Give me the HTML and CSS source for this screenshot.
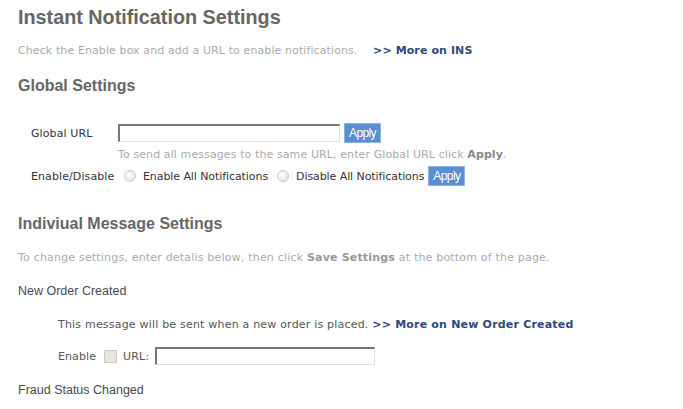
FILE: index.html
```html
<!DOCTYPE html>
<html lang="en">
<head>
    <meta charset="UTF-8">
    <title>Instant Notification Settings</title>
    <link rel="stylesheet" href="styles.css">
</head>
<body>
    <div class="page">
        <h1>Instant Notification Settings</h1>
        <p class="note">Check the Enable box and add a URL to enable notifications. <a class="more spaced" href="#">&gt;&gt; More on INS</a></p>

        <h2>Global Settings</h2>
        <div class="global">
            <div class="row">
                <label class="lbl" for="gurl">Global URL</label>
                <input type="text" id="gurl" class="url wide">
                <button class="apply">Apply</button>
            </div>
            <p class="hint">To send all messages to the same URL, enter Global URL click <b>Apply</b>.</p>
            <div class="row">
                <span class="lbl">Enable/Disable</span>
                <span class="radio"></span><span class="opt">Enable All Notifications</span>
                <span class="radio"></span><span class="opt">Disable All Notifications</span>
                <button class="apply">Apply</button>
            </div>
        </div>

        <h2 class="second">Indiviual Message Settings</h2>
        <p class="note wide-note">To change settings, enter detalis below, then click <b>Save Settings</b> at the bottom of the page.</p>

        <h3>New Order Created</h3>
        <div class="message">
            <p class="desc">This message will be sent when a new order is placed. <a class="more" href="#">&gt;&gt; More on New Order Created</a></p>
            <div class="row">
                <span>Enable</span>
                <span class="check"></span>
                <span>URL:</span>
                <input type="text" class="url">
            </div>
        </div>

        <h3 class="next">Fraud Status Changed</h3>
    </div>
</body>
</html>
```

FILE: styles.css
```css
/* Page */
body {
    margin: 0;
    background: #fff;
    font-family: "DejaVu Sans", Verdana, sans-serif;
    font-size: 11px;
    letter-spacing: 0.1px;
    color: #444;
}

.page {
    padding: 7px 18px;
}

/* Headings */
h1, h2, h3 {
    font-family: "Liberation Sans", Arial, sans-serif;
    color: #666;
    letter-spacing: 0;
    margin: 0;
}

h1 {
    font-size: 19.8px;
    line-height: 20px;
}

h2 {
    font-size: 16px;
    line-height: 18px;
    margin-top: 19px;
}

h2.second {
    margin-top: 29px;
}

h3 {
    font-size: 12.5px;
    font-weight: normal;
    color: #4a4a4a;
    line-height: 14px;
    margin-top: 19px;
}

h3.next {
    margin-top: 18px;
}

p {
    margin: 0;
    line-height: 14px;
}

.note {
    color: #aaa;
    margin-top: 17px;
}

h2 + .note {
    margin-top: 18px;
}

.wide-note {
    letter-spacing: 0.19px;
}

.note b {
    color: #999;
}

.more {
    color: #2c4a7c;
    font-weight: bold;
    text-decoration: none;
}

.more.spaced {
    margin-left: 12px;
}

/* Global block */
.global {
    padding: 28px 0 0 13px;
}

.row {
    display: flex;
    align-items: center;
    height: 20px;
}

.lbl {
    width: 87px;
    color: #333;
}

.hint {
    color: #aaa;
    margin: 5px 0 4px 87px;
}

.hint b {
    color: #888;
}

input.url {
    height: 18px;
    box-sizing: border-box;
    border: 1px solid #ddd;
    border-top: 2px solid #777;
    border-left: 2px solid #777;
    padding: 0;
    margin: 0;
    width: 220px;
}

input.wide {
    width: 222px;
}

.apply {
    font-family: "Liberation Sans", Arial, sans-serif;
    font-size: 12px;
    color: #fff;
    background: #5a8ed2;
    border: 1px solid #8fb3e0;
    height: 20px;
    padding: 0 4px;
    margin-left: 4px;
    letter-spacing: -0.6px;
}

.radio {
    width: 10px;
    height: 10px;
    border-radius: 50%;
    border: 1px solid #c8c8c8;
    background: radial-gradient(circle at 40% 40%, #fff, #dcdcdc);
    margin: 0 7px 0 6px;
}

.opt {
    color: #333;
    letter-spacing: -0.08px;
}

.opt + .radio {
    margin-left: 9px;
}

/* Message block */
.message {
    padding-left: 40px;
}

.desc {
    margin-top: 20px;
    color: #555;
    letter-spacing: 0.2px;
}

.message .row {
    margin-top: 15px;
    height: 18px;
    color: #555;
}

.check {
    width: 11px;
    height: 11px;
    border: 1px solid #ccc;
    background: #e6e6dc;
    margin: 0 6px 0 8px;
}

.message .url {
    margin-left: 6px;
}
```
